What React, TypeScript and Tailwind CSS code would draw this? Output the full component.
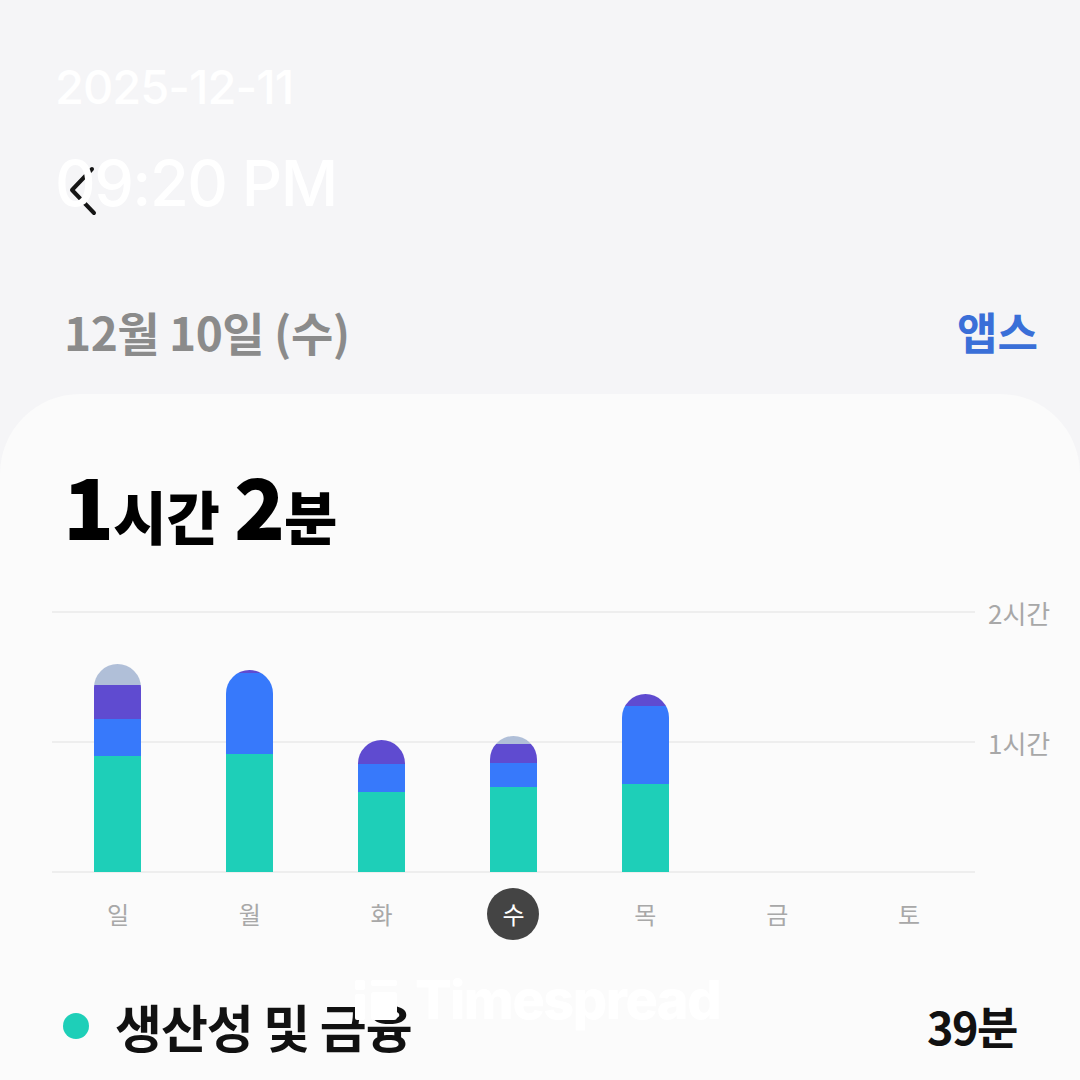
interface Segment {
  color: string
  height: number
}

interface DayBar {
  label: string
  selected?: boolean
  segments: Segment[]
}

const TEAL = 'bg-[#1ecfb8]'
const BLUE = 'bg-[#3779fb]'
const PURPLE = 'bg-[#5f4bd0]'
const SLATE = 'bg-[#b0bfd8]'

// segments listed top to bottom
const days: DayBar[] = [
  { label: '일', segments: [{ color: SLATE, height: 21 }, { color: PURPLE, height: 34 }, { color: BLUE, height: 37 }, { color: TEAL, height: 116 }] },
  { label: '월', segments: [{ color: PURPLE, height: 3 }, { color: BLUE, height: 81 }, { color: TEAL, height: 118 }] },
  { label: '화', segments: [{ color: PURPLE, height: 24 }, { color: BLUE, height: 28 }, { color: TEAL, height: 80 }] },
  { label: '수', selected: true, segments: [{ color: SLATE, height: 8 }, { color: PURPLE, height: 19 }, { color: BLUE, height: 24 }, { color: TEAL, height: 85 }] },
  { label: '목', segments: [{ color: PURPLE, height: 12 }, { color: BLUE, height: 78 }, { color: TEAL, height: 88 }] },
  { label: '금', segments: [] },
  { label: '토', segments: [] },
]

const font = { fontFamily: '"Noto Sans CJK KR", "Noto Sans", sans-serif' }

function Chart(): JSX.Element {
  return (
    <div className="flex flex-col">
      <div className="relative flex h-[260px]">
        <div className="absolute inset-0 flex flex-col justify-between">
          {['2시간', '1시간', ''].map((label, i) => (
            <div key={i} className="flex h-0 items-center">
              <div className="ml-[52px] w-[923px] border-t-2 border-[#eeeeee]" />
              <span className="ml-[13px] text-[26px] text-[#a8a8a8]">{label}</span>
            </div>
          ))}
        </div>
        <div className="relative ml-[52px] grid w-[923px] grid-cols-7 items-end">
          {days.map((d) => (
            <div key={d.label} className="flex justify-center">
              {d.segments.length > 0 ? (
                <div className="flex w-[47px] flex-col overflow-hidden rounded-t-[24px]">
                  {d.segments.map((s, i) => (
                    <div key={i} className={s.color} style={{ height: s.height }} />
                  ))}
                </div>
              ) : null}
            </div>
          ))}
        </div>
      </div>
      <div className="ml-[52px] mt-[16px] grid w-[923px] grid-cols-7">
        {days.map((d) => (
          <div key={d.label} className="flex justify-center">
            <span
              className={`flex h-[52px] w-[52px] items-center justify-center rounded-full text-[24px] ${
                d.selected ? 'bg-[#444444] text-white' : 'text-[#a8a8a8]'
              }`}
            >
              {d.label}
            </span>
          </div>
        ))}
      </div>
    </div>
  )
}

export default function App(): JSX.Element {
  return (
    <div className="relative flex h-[1080px] w-[1080px] flex-col overflow-hidden bg-[#f5f5f7]" style={font}>
      {/* back button sits under the overlaid timestamp */}
      <svg
        className="absolute left-[68px] top-[165px]"
        width="32"
        height="54"
        viewBox="0 0 32 54"
        fill="none"
        stroke="#151515"
        strokeWidth="4"
        strokeLinecap="round"
        strokeLinejoin="round"
      >
        <polyline points="24,4 4,25 26,48" />
      </svg>
      <div className="relative flex flex-col pl-[55px] pt-[57px] font-medium text-white" style={{ fontFamily: 'Inter, "Noto Sans", sans-serif' }}>
        <span className="text-[47px] leading-[60px] tracking-[-1px]">2025-12-11</span>
        <span className="mt-[26px] text-[63px] leading-[80px] tracking-[-1.5px]">09:20 PM</span>
      </div>

      <div className="mt-[80px] flex items-center justify-between pl-[64px] pr-[42px]">
        <span className="text-[46px] font-bold leading-[56px] tracking-[-0.5px] text-[#8b8b8b]">12월 10일 (수)</span>
        <span className="text-[44px] font-bold leading-[56px] text-[#3a6fd8]">앱스</span>
      </div>

      <div className="mt-[35px] flex flex-1 flex-col rounded-t-[80px] bg-[#fbfbfb]">
        <div className="ml-[63px] mt-[65px] flex items-baseline font-black text-black">
          <span className="text-[84px] leading-[90px] tracking-[-3px]">1</span>
          <span className="ml-[2px] text-[58px] leading-[90px]">시간</span>
          <span className="ml-[14px] text-[84px] leading-[90px] tracking-[-3px]">2</span>
          <span className="ml-[2px] text-[58px] leading-[90px]">분</span>
        </div>

        <div className="mt-[52px]">
          <Chart />
        </div>

        <div className="mt-[56px] flex items-center pl-[63px] pr-[63px]">
          <span className="h-[26px] w-[26px] rounded-full bg-[#1ecfb8]" />
          <span className="ml-[26px] text-[51px] font-semibold leading-[60px] tracking-[-1px] text-[#111111]">
            생산성 및 금융
          </span>
          <span className="ml-auto text-[45px] font-bold leading-[60px] tracking-[-1.5px] text-[#111111]">39분</span>
        </div>
      </div>

      <div className="absolute left-[355px] top-[972px] flex items-center gap-[16px] text-white" style={{ fontFamily: 'Inter, sans-serif' }}>
        <svg width="44" height="44" viewBox="0 0 44 44" fill="white">
          <rect x="0" y="2" width="10" height="10" rx="2" />
          <rect x="16" y="2" width="26" height="6" rx="2" />
          <rect x="0" y="16" width="10" height="26" rx="2" />
          <rect x="16" y="14" width="26" height="28" rx="3" />
        </svg>
        <span className="text-[54px] font-extrabold leading-[56px] tracking-[-1.5px]">Timespread</span>
      </div>
    </div>
  )
}
